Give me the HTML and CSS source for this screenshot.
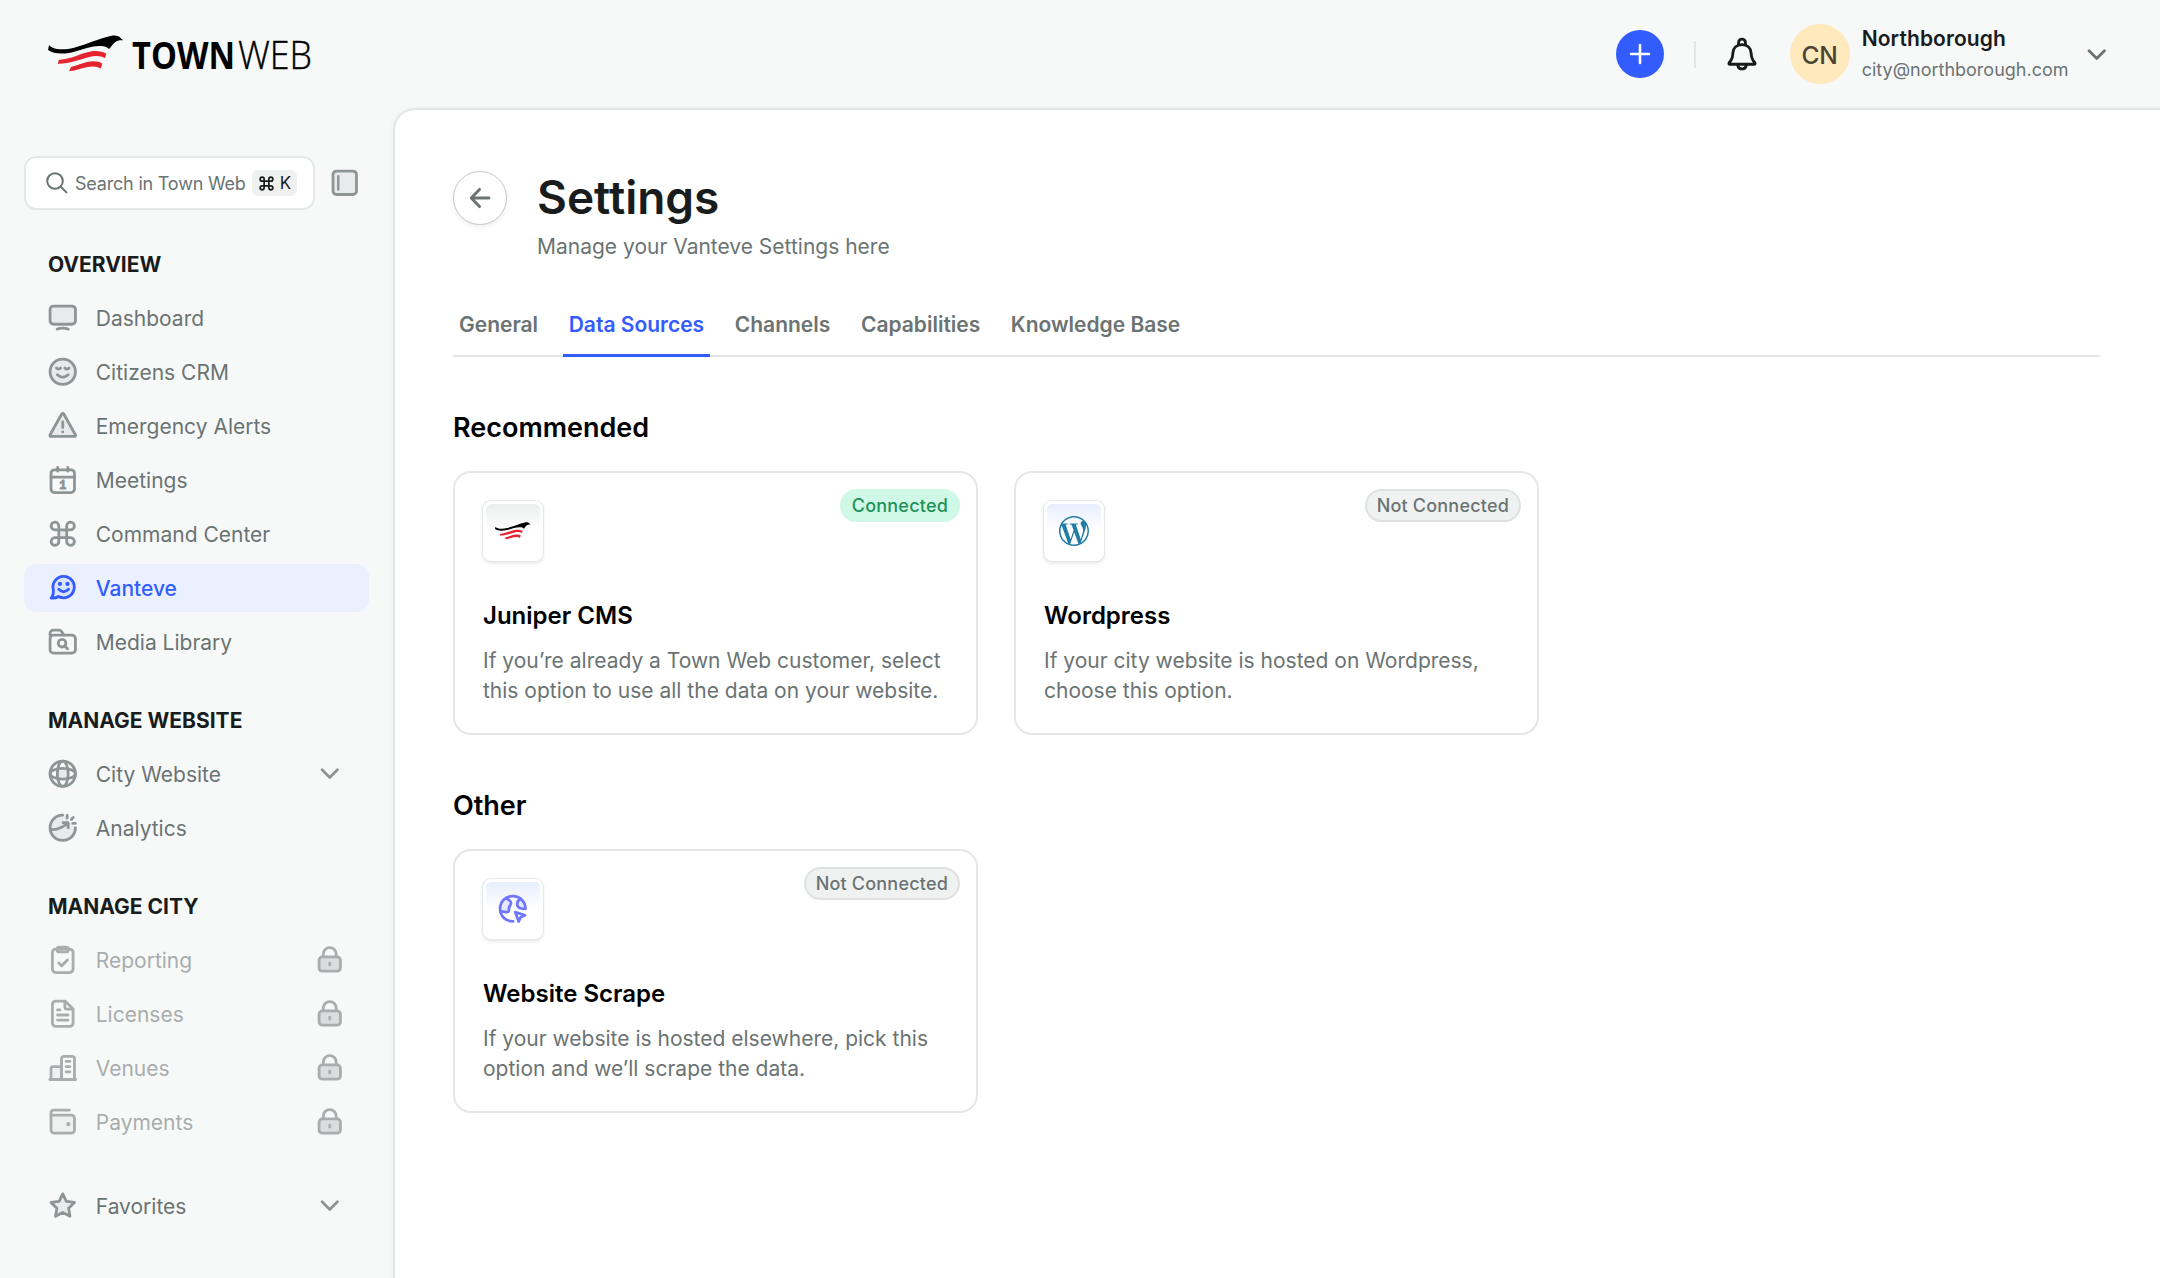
FILE: index.html
```html
<!DOCTYPE html>
<html lang="en">
<head>
    <meta charset="UTF-8">
    <title>Settings - Town Web</title>
    <link rel="stylesheet" href="styles.css">
</head>
<body>
    <!-- shared symbols -->
    <svg class="sprite" aria-hidden="true">
        <symbol id="eagle" viewBox="144 106 228 112">
            <path fill="#000" d="M147 136C157 150 190 152 222 144C262 134 300 115 332 109C346 106 358 109 362 115C364 118 367 119 370 122C360 121 352 122 346 127C338 133 335 141 327 148C321 142 314 139 302 139C276 138 250 149 220 157C190 165 160 163 144 151Z"/>
            <path fill="#e5242f" d="M177 180C210 181 240 161 275 155C292 153 308 156 319 162L315 176C303 168 286 167 268 172C236 180 208 193 173 192Z"/>
            <path fill="#e5242f" d="M213 202C240 196 252 186 280 185C292 185 300 187 307 192L302 207C293 200 278 199 263 202C245 205 229 213 207 215Z"/>
        </symbol>
        <symbol id="chevron" viewBox="0 0 18 18">
            <path d="M4.6 6.7L9 11.1l4.4-4.4"/>
        </symbol>
        <symbol id="lock" viewBox="0 0 18 18">
            <rect class="lock-body" x="2.9" y="7.4" width="12.2" height="8.1" rx="1.8"/>
            <path d="M5.3 7.2V5.8a3.7 3.7 0 0 1 7.4 0v1.4M9 10.9v1.1"/>
        </symbol>
    </svg>

    <header class="topbar">
        <div class="logo">
            <svg class="logo-bird"><use href="#eagle"/></svg>
            <svg class="logo-town" viewBox="0 0 105 60">
                <text x="0" y="44" textLength="103" lengthAdjust="spacingAndGlyphs">TOWN</text>
            </svg>
            <svg class="logo-web" viewBox="0 0 78 60">
                <text x="1" y="44" textLength="74" lengthAdjust="spacingAndGlyphs">WEB</text>
            </svg>
        </div>
        <div class="topbar-actions">
            <button class="add-btn">
                <svg viewBox="0 0 24 24"><path d="M12 3v18M3 12h18"/></svg>
            </button>
            <span class="divider"></span>
            <svg class="bell" viewBox="0 0 36 36">
                <path d="M5.2 26.6C8 24 8.7 21 8.9 17C9.2 11.6 13 8.6 18 8.6S26.8 11.6 27.1 17C27.3 21 28 24 30.8 26.6Q31.6 28.3 30 28.3H6Q4.4 28.3 5.2 26.6Z"/>
                <path d="M14.6 8.8V6.5a3.4 3.4 0 0 1 6.8 0v2.3M13.8 29.4c.4 2.2 2 3.5 4.2 3.5s3.8-1.3 4.2-3.5"/>
            </svg>
            <div class="avatar">CN</div>
            <div class="account">
                <div class="account-name">Northborough</div>
                <div class="account-email">city@northborough.com</div>
            </div>
            <svg class="icon account-chevron"><use href="#chevron"/></svg>
        </div>
    </header>

    <div class="layout">
        <aside class="sidebar">
            <div class="search-row">
                <div class="search">
                    <svg class="search-icon" viewBox="0 0 22 22"><circle cx="9" cy="9" r="7.8"/><path d="M14.8 14.8l5.6 5.6"/></svg>
                    <span class="search-text">Search in Town Web</span>
                    <span class="kbd">
                        <svg viewBox="0 0 18 18"><path d="M6.5 6.5v5h5v-5zM6.5 6.5H4.4A2.1 2.1 0 1 1 6.5 4.4zM11.5 6.5V4.4a2.1 2.1 0 1 1 2.1 2.1zM11.5 11.5h2.1a2.1 2.1 0 1 1-2.1 2.1zM6.5 11.5v2.1a2.1 2.1 0 1 1-2.1-2.1z"/></svg>
                        K
                    </span>
                </div>
                <svg class="icon panel-icon" viewBox="0 0 18 18"><rect class="tint" x="2.3" y="2.3" width="13.4" height="13.4" rx="2"/><path d="M5.3 5.2v7.6" stroke-width="1.4"/></svg>
            </div>

            <h3 class="nav-title">OVERVIEW</h3>
            <nav class="nav">
                <a class="nav-item">
                    <svg class="icon" viewBox="0 0 18 18"><rect class="tint" x="1.75" y="2.3" width="14.5" height="10.4" rx="2"/><path d="M5.8 15.5Q9 14.3 12.2 15.5"/></svg>
                    <span>Dashboard</span>
                </a>
                <a class="nav-item">
                    <svg class="icon" viewBox="0 0 18 18"><circle class="tint" cx="9" cy="9" r="7.25"/><path d="M5.4 6.9Q6.6 8.1 7.8 6.9M10.2 6.9Q11.4 8.1 12.6 6.9M5.9 10.7Q9 13.4 12.1 10.7"/></svg>
                    <span>Citizens CRM</span>
                </a>
                <a class="nav-item">
                    <svg class="icon" viewBox="0 0 18 18"><path class="tint" d="M8.4 2.3Q9 1.5 9.6 2.3L16.3 14.3Q16.5 15.1 15.7 15.1H2.3Q1.5 15.1 1.7 14.3Z"/><path d="M9 6.8v3.2"/><circle class="dot" cx="9" cy="12.5" r=".85"/></svg>
                    <span>Emergency Alerts</span>
                </a>
                <a class="nav-item">
                    <svg class="icon" viewBox="0 0 18 18"><rect x="2.3" y="3.3" width="13.4" height="13" rx="2"/><path d="M2.3 7.5h13.4M6.1 1.9v2.2M11.9 1.9v2.2"/><text class="cal-day" x="9" y="14.1">1</text></svg>
                    <span>Meetings</span>
                </a>
                <a class="nav-item">
                    <svg class="icon" viewBox="0 0 18 18"><path class="tint" d="M6.75 6.75v4.5h4.5v-4.5z"/><path d="M6.75 6.75H4.5A2.2 2.2 0 1 1 6.75 4.5zM11.25 6.75V4.5a2.2 2.2 0 1 1 2.25 2.25zM11.25 11.25h2.25a2.2 2.2 0 1 1-2.25 2.25zM6.75 11.25v2.25a2.2 2.2 0 1 1-2.25-2.25z"/></svg>
                    <span>Command Center</span>
                </a>
                <a class="nav-item active">
                    <svg class="icon" viewBox="0 0 18 18"><path class="tint" d="M3.6 10.2A6.1 6.1 0 1 1 6.6 14C5.2 14.9 3.7 15 2.3 14.9C3.3 13.8 3.8 12 3.6 10.2Z"/><circle class="dot" cx="7.4" cy="6.8" r="1.2"/><circle class="dot" cx="11.7" cy="6.8" r="1.2"/><path d="M6.7 9.9Q9.5 12.6 12.3 9.9"/></svg>
                    <span>Vanteve</span>
                </a>
                <a class="nav-item">
                    <svg class="icon" viewBox="0 0 18 18"><path d="M1.75 5.4V4.2a1.8 1.8 0 0 1 1.8-1.8h3.3a1.8 1.8 0 0 1 1.5.8L9.6 5.2"/><rect x="1.75" y="5.2" width="14.5" height="10.3" rx="2"/><circle cx="8.6" cy="9.8" r="2.2"/><path d="M10.3 11.5l1.4 1.5"/></svg>
                    <span>Media Library</span>
                </a>
            </nav>

            <h3 class="nav-title">MANAGE WEBSITE</h3>
            <nav class="nav">
                <a class="nav-item">
                    <svg class="icon" viewBox="0 0 18 18"><path class="tint" stroke="none" d="M6 6h6v6H6z"/><circle cx="9" cy="9" r="7.25"/><ellipse cx="9" cy="9" rx="3.1" ry="7.25"/><ellipse cx="9" cy="9" rx="7.25" ry="3.1"/></svg>
                    <span>City Website</span>
                    <svg class="icon trail"><use href="#chevron"/></svg>
                </a>
                <a class="nav-item">
                    <svg class="icon" viewBox="0 0 18 18"><path class="tint" d="M9 1.75A7.25 7.25 0 1 0 16.25 9"/><path d="M2 10.1C5.6 10.3 8.6 9.2 11.8 6.4M9.2 6.1h2.9v2.9M11.5 1.9v1.6M15 3.2l-1.1 1.1M14.7 6.5h1.5"/></svg>
                    <span>Analytics</span>
                </a>
            </nav>

            <h3 class="nav-title">MANAGE CITY</h3>
            <nav class="nav">
                <a class="nav-item locked">
                    <svg class="icon" viewBox="0 0 18 18"><rect x="3.1" y="2.9" width="11.8" height="13.4" rx="2"/><rect x="5.9" y="1.75" width="6.2" height="2.8" rx="1"/><path d="M6.7 10.8l1.6 1.7 3.4-3.3"/></svg>
                    <span>Reporting</span>
                    <svg class="icon trail"><use href="#lock"/></svg>
                </a>
                <a class="nav-item locked">
                    <svg class="icon" viewBox="0 0 18 18"><path d="M3.1 3.75a2 2 0 0 1 2-2h5.2L14.9 6.3v7.95a2 2 0 0 1-2 2H5.1a2 2 0 0 1-2-2z"/><path d="M10.2 2v3.2a1.2 1.2 0 0 0 1.2 1.2h3.4M6 6.8h1.4M6 9.7h6M6 12.6h6"/></svg>
                    <span>Licenses</span>
                    <svg class="icon trail"><use href="#lock"/></svg>
                </a>
                <a class="nav-item locked">
                    <svg class="icon" viewBox="0 0 18 18"><path class="tint" d="M2.3 15.5V9.4a1 1 0 0 1 1-1h5v7.1"/><path d="M8.3 15.5V3.8a1.3 1.3 0 0 1 1.3-1.3h4.8a1.3 1.3 0 0 1 1.3 1.3v11.7M1.6 15.7h14.8M10.9 5.4h2.2M10.9 8.3h2.2M10.9 11.3h2.2"/></svg>
                    <span>Venues</span>
                    <svg class="icon trail"><use href="#lock"/></svg>
                </a>
                <a class="nav-item locked">
                    <svg class="icon" viewBox="0 0 18 18"><path class="tint" d="M2.3 5.2h11.6a1.8 1.8 0 0 1 1.8 1.8v6.7a1.8 1.8 0 0 1-1.8 1.8H4.1a1.8 1.8 0 0 1-1.8-1.8z"/><path d="M2.3 5.2V3.8a1.5 1.5 0 0 1 1.5-1.5h9"/><circle class="dot" cx="12.2" cy="10.3" r="1.2"/></svg>
                    <span>Payments</span>
                    <svg class="icon trail"><use href="#lock"/></svg>
                </a>
            </nav>

            <nav class="nav favorites">
                <a class="nav-item">
                    <svg class="icon" viewBox="0 0 18 18"><path class="tint" d="M9 2.2l2.06 4.25 4.64.65-3.36 3.27.8 4.63L9 12.8 4.86 15l.8-4.63L2.3 7.1l4.64-.65z"/></svg>
                    <span>Favorites</span>
                    <svg class="icon trail"><use href="#chevron"/></svg>
                </a>
            </nav>
        </aside>

        <main class="main">
            <div class="page-head">
                <button class="back-btn">
                    <svg viewBox="0 0 24 24"><path d="M21 12H3.4M11.5 3.4L3.2 12l8.3 8.6"/></svg>
                </button>
                <div>
                    <h1>Settings</h1>
                    <p class="subtitle">Manage your Vanteve Settings here</p>
                </div>
            </div>

            <div class="tabs">
                <a class="tab">General</a>
                <a class="tab active">Data Sources</a>
                <a class="tab">Channels</a>
                <a class="tab">Capabilities</a>
                <a class="tab">Knowledge Base</a>
            </div>

            <section class="section">
                <h2>Recommended</h2>
                <div class="cards">
                    <article class="card">
                        <div class="card-top">
                            <div class="tile tile-gray">
                                <svg class="tile-bird"><use href="#eagle"/></svg>
                            </div>
                            <span class="badge connected">Connected</span>
                        </div>
                        <h4>Juniper CMS</h4>
                        <p>If you’re already a Town Web customer, select this option to use all the data on your website.</p>
                    </article>
                    <article class="card">
                        <div class="card-top">
                            <div class="tile">
                                <svg class="tile-wp" viewBox="0 0 24 24"><path d="M21.469 6.825c.84 1.537 1.318 3.3 1.318 5.175 0 3.979-2.156 7.456-5.363 9.325l3.295-9.527c.615-1.54.82-2.771.82-3.864 0-.405-.026-.78-.07-1.11m-7.981.105c.647-.03 1.232-.105 1.232-.105.582-.075.514-.93-.067-.899 0 0-1.755.135-2.88.135-1.064 0-2.85-.15-2.85-.15-.585-.03-.661.855-.075.885 0 0 .54.061 1.125.09l1.68 4.605-2.37 7.08L5.354 6.9c.649-.03 1.234-.1 1.234-.1.585-.075.516-.93-.065-.896 0 0-1.746.138-2.874.138-.2 0-.438-.008-.69-.015C4.911 3.15 8.235 1.215 12 1.215c2.809 0 5.365 1.072 7.286 2.833-.046-.003-.091-.009-.141-.009-1.06 0-1.812.923-1.812 1.914 0 .89.513 1.643 1.06 2.531.411.72.89 1.643.89 2.977 0 .915-.354 1.994-.821 3.479l-1.075 3.585-3.9-11.61.001.014zM12 22.784c-1.059 0-2.081-.153-3.048-.437l3.237-9.406 3.315 9.087c.024.053.05.101.078.149-1.12.393-2.325.609-3.582.609M1.211 12c0-1.564.336-3.05.935-4.39L7.29 21.709C3.694 19.96 1.212 16.271 1.211 12M12 0C5.385 0 0 5.385 0 12s5.385 12 12 12 12-5.385 12-12S18.615 0 12 0"/></svg>
                            </div>
                            <span class="badge">Not Connected</span>
                        </div>
                        <h4>Wordpress</h4>
                        <p>If your city website is hosted on Wordpress, choose this option.</p>
                    </article>
                </div>
            </section>

            <section class="section">
                <h2>Other</h2>
                <div class="cards">
                    <article class="card">
                        <div class="card-top">
                            <div class="tile">
                                <svg class="icon tile-globe" viewBox="0 0 18 18">
                                    <path class="tint" stroke="none" d="M5.2 2.9C6 3.9 7.9 4 8 5.6C8 7 7 7.3 6.9 8.4C6.8 9.6 7 10.8 5.9 10.9L2 10.7C1.2 7.5 2.5 4.6 5.2 2.9Z"/>
                                    <path class="tint" stroke="none" d="M13.6 3.3C12 4.2 11.2 5.6 11.7 7.2C12.2 8.8 13.8 9.1 16.2 9.1C16.3 6.7 15.3 4.6 13.6 3.3Z"/>
                                    <path d="M16.25 9.1A7.25 7.25 0 1 0 9.2 16.25M5.3 2.8C6 3.9 7.9 4 8 5.6C8 7 7 7.3 6.9 8.4C6.8 9.6 7 10.8 5.9 10.9C4.5 11 3.5 10.4 2 10.8M13.6 3.3C12 4.2 11.2 5.6 11.7 7.2C12.2 8.8 13.8 9.1 16.2 9.1"/>
                                    <path d="M10.4 10.9L16 12.7L13.5 13.9L12.4 16.3Z"/>
                                </svg>
                            </div>
                            <span class="badge">Not Connected</span>
                        </div>
                        <h4>Website Scrape</h4>
                        <p>If your website is hosted elsewhere, pick this option and we’ll scrape the data.</p>
                    </article>
                </div>
            </section>
        </main>
    </div>
</body>
</html>
```
FILE: styles.css
```css
* {
    box-sizing: border-box;
    margin: 0;
    padding: 0;
}

body {
    display: flex;
    flex-direction: column;
    height: 100vh;
    overflow: hidden;
    background: #f7f9f9;
    font-family: 'Inter', 'Liberation Sans', sans-serif;
    font-size: 21px;
    line-height: 30px;
    color: #6b7373;
}

button {
    font: inherit;
    border: none;
    cursor: pointer;
}

svg {
    display: block;
    flex: none;
    fill: none;
    stroke-linecap: round;
    stroke-linejoin: round;
}

.sprite {
    position: absolute;
    width: 0;
    height: 0;
}

.icon {
    width: 31.5px;
    height: 31.5px;
    stroke: #8d9595;
    stroke-width: 1.6;
}

.tint {
    fill: #e8ebeb;
}

.dot {
    fill: #8d9595;
    stroke: none;
}

/* top bar */
.topbar {
    display: flex;
    flex: none;
    justify-content: space-between;
    height: 108px;
    padding: 0 48px;
}

.logo {
    display: flex;
    align-items: center;
}

.logo-bird {
    width: 76px;
    height: 37.3px;
    margin-right: 8px;
}

.logo-town,
.logo-web {
    height: 60px;
    margin-top: 2px;
    fill: #000;
    font-family: 'Open Sans', 'Noto Sans', sans-serif;
    font-size: 38px;
}

.logo-town {
    width: 105px;
    font-weight: 700;
}

.logo-web {
    width: 78px;
    font-weight: 300;
    stroke: #000;
    stroke-width: 0.4;
}

.topbar-actions {
    display: flex;
    align-items: center;
}

.add-btn {
    display: flex;
    align-items: center;
    justify-content: center;
    width: 48px;
    height: 48px;
    border-radius: 50%;
    background: #335cff;
}

.add-btn svg {
    width: 24px;
    height: 24px;
    stroke: #fff;
    stroke-width: 2.6;
}

.divider {
    width: 2px;
    height: 27px;
    margin: 0 28px 0 30px;
    background: #e3e6e6;
}

.bell {
    width: 36px;
    height: 36px;
    stroke: #191c1c;
    stroke-width: 2.9;
}

.avatar {
    display: flex;
    align-items: center;
    justify-content: center;
    width: 60px;
    height: 60px;
    margin: 0 12px 0 30px;
    padding-top: 1px;
    border-radius: 50%;
    background: #ffe9bd;
    color: #4a4436;
    font-size: 24.5px;
    font-weight: 450;
}

.account-name {
    color: #191c1c;
    font-weight: 600;
    letter-spacing: 0.1px;
}

.account-email {
    margin-top: 2px;
    font-size: 18px;
    line-height: 28px;
}

.account-chevron {
    margin-left: 12px;
    margin-top: 1px;
    stroke: #6b7373;
}

/* sidebar */
.layout {
    display: flex;
    flex: 1;
}

.sidebar {
    flex: none;
    width: 393px;
    padding: 48px 24px 0;
}

.search-row {
    display: flex;
    align-items: center;
    gap: 14px;
}

.search {
    display: flex;
    align-items: center;
    width: 291px;
    height: 54px;
    padding: 0 16px 0 20px;
    border: 2px solid #e5e8e8;
    border-radius: 12px;
    background: #fff;
}

.search-icon {
    width: 22px;
    height: 22px;
    stroke: #6b7373;
    stroke-width: 2;
}

.search-text {
    margin-left: 7px;
    padding-top: 1px;
    font-size: 18px;
    letter-spacing: -0.2px;
    white-space: nowrap;
}

.kbd {
    display: flex;
    align-items: center;
    justify-content: center;
    gap: 5px;
    width: 45px;
    height: 26px;
    margin-left: auto;
    border-radius: 6px;
    background: #eff1f1;
    color: #191c1c;
    font-size: 17px;
}

.kbd svg {
    width: 17px;
    height: 17px;
    stroke: #191c1c;
    stroke-width: 1.8;
}

.nav-title {
    margin: 34px 24px 8px;
    color: #191c1c;
    font-size: 21px;
    font-weight: 700;
    line-height: 42px;
}

.nav {
    display: flex;
    flex-direction: column;
    gap: 6px;
}

.nav-item {
    display: flex;
    align-items: center;
    gap: 17px;
    height: 48px;
    padding: 0 23.25px;
    border-radius: 12px;
}

.nav-item span {
    padding-top: 2px;
}

.nav-item .trail {
    margin-left: auto;
}

.nav-item.active {
    background: #ebf0ff;
    color: #335cff;
    font-weight: 500;
}

.nav-item.active .icon {
    stroke: #335cff;
}

.nav-item.active .tint {
    fill: #dbe4ff;
}

.nav-item.active .dot {
    fill: #335cff;
}

.nav-item.locked {
    color: #a9adad;
}

.nav-item.locked .icon {
    stroke: #a9adad;
}

.nav-item.locked .dot {
    fill: #a9adad;
}

.nav-item.locked .tint {
    fill: #eff1f1;
}

.lock-body {
    fill: #dadcde;
}

.cal-day {
    fill: #8d9595;
    stroke: #8d9595;
    stroke-width: 0.5;
    font: bold 6.8px 'Liberation Mono', monospace;
    text-anchor: middle;
}

.favorites {
    margin-top: 36px;
}

/* main panel */
.main {
    flex: 1;
    padding: 61px 60px 0 58px;
    border-top: 2px solid #e3e6e6;
    border-left: 2px solid #e3e6e6;
    border-top-left-radius: 22px;
    background: #fff;
    box-shadow: -1px 0 4px rgba(25, 28, 28, 0.04);
}

.page-head {
    display: flex;
    align-items: flex-start;
    gap: 30px;
}

.back-btn {
    display: flex;
    align-items: center;
    justify-content: center;
    width: 54px;
    height: 54px;
    border: 1px solid #c6c9c9;
    border-radius: 50%;
    background: #fff;
    box-shadow: 0 2px 4px rgba(25, 28, 28, 0.08);
}

.back-btn svg {
    width: 24px;
    height: 24px;
    stroke: #6b7373;
    stroke-width: 2.9;
}

h1 {
    margin-top: 1px;
    color: #191c1c;
    font-size: 46px;
    font-weight: 600;
    line-height: 51px;
}

.subtitle {
    margin-top: 9px;
}

.tabs {
    display: flex;
    gap: 18.6px;
    margin-top: 48px;
    box-shadow: inset 0 -2px 0 #e3e6e6;
}

.tab {
    padding: 0 6px 14px;
    border-bottom: 3px solid transparent;
    font-weight: 600;
}

.tab.active {
    border-color: #335cff;
    color: #335cff;
}

.section {
    margin-top: 52.5px;
}

h2 {
    margin-bottom: 25.5px;
    color: #000;
    font-size: 27px;
    font-weight: 600;
    line-height: 36px;
}

.cards {
    display: flex;
    gap: 36px;
}

.card {
    width: 525px;
    height: 264px;
    padding: 28px;
    border: 2px solid #e5e7e7;
    border-radius: 18px;
}

.card-top {
    display: flex;
    align-items: flex-start;
    justify-content: space-between;
}

.tile {
    display: flex;
    align-items: center;
    justify-content: center;
    width: 60px;
    height: 60px;
    border: 3px solid #fff;
    border-radius: 8px;
    background: linear-gradient(#e8eefe, #fff 50%) padding-box, #fff;
    box-shadow: 0 0 0 1px #e5e8e8, 0 2px 4px rgba(25, 28, 28, 0.12);
}

.tile-gray {
    background: linear-gradient(#eceeee, #fff 50%) padding-box, #fff;
}

.tile-bird {
    width: 36px;
    height: 17.7px;
}

.tile-wp {
    width: 30px;
    height: 30px;
    fill: #207ba5;
}

.tile-globe {
    stroke: #7077ff;
}

.tile-globe .tint {
    fill: #e4e9fe;
}

.badge {
    height: 33px;
    margin: -12px -12px 0 0;
    padding: 0 10px;
    border: 2px solid #e0e2e2;
    border-radius: 17px;
    background: #f0f2f2;
    font-size: 18px;
    font-weight: 500;
    line-height: 29px;
    letter-spacing: 0.2px;
}

.badge.connected {
    border-color: #cff9e6;
    background: #cff9e6;
    color: #1f9159;
}

h4 {
    margin-top: 37px;
    color: #000;
    font-size: 24px;
    font-weight: 600;
    line-height: 36px;
}

.card p {
    margin-top: 12px;
}
```
